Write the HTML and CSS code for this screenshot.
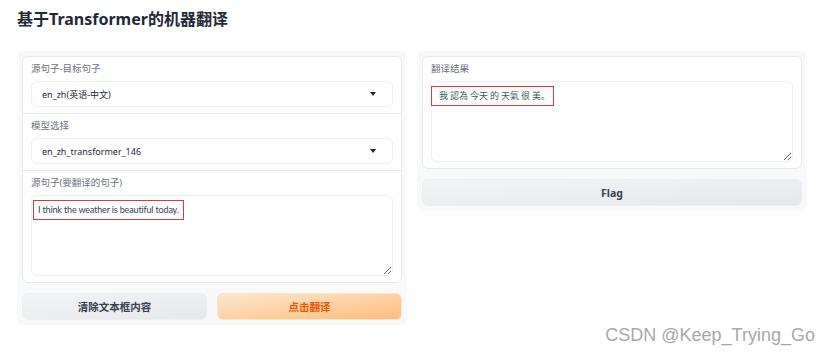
FILE: index.html
```html
<!DOCTYPE html>
<html lang="zh">
<head>
    <meta charset="UTF-8">
    <meta name="viewport" content="width=device-width, initial-scale=1.0">
    <title>基于Transformer的机器翻译</title>
    <link rel="stylesheet" href="styles.css">
</head>
<body>

    <h1 class="title">基于Transformer的机器翻译</h1>

    <div class="app">
        <div class="column">
            <div class="panel">
                <div class="box">
                    <div class="field">
                        <div class="label">源句子-目标句子</div>
                        <div class="select">
                            <span>en_zh(英语-中文)</span>
                            <span class="caret"></span>
                        </div>
                    </div>
                    <div class="field">
                        <div class="label">模型选择</div>
                        <div class="select">
                            <span>en_zh_transformer_146</span>
                            <span class="caret"></span>
                        </div>
                    </div>
                    <div class="field">
                        <div class="label">源句子(要翻译的句子)</div>
                        <div class="area-wrap">
                            <textarea class="area" readonly>I think the weather is beautiful today.</textarea>
                            <div class="mark mark-src"></div>
                        </div>
                    </div>
                </div>
                <div class="buttons">
                    <button class="btn btn-grey">清除文本框内容</button>
                    <button class="btn btn-orange">点击翻译</button>
                </div>
            </div>
        </div>

        <div class="column">
            <div class="panel">
                <div class="box">
                    <div class="field">
                        <div class="label">翻译结果</div>
                        <div class="area-wrap">
                            <textarea class="area area-out" readonly>我 認為 今天 的 天氣 很 美。</textarea>
                            <div class="mark mark-out"></div>
                        </div>
                    </div>
                </div>
                <div class="buttons">
                    <button class="btn btn-grey btn-flag">Flag</button>
                </div>
            </div>
        </div>
    </div>

    <div class="watermark">CSDN @Keep_Trying_Go</div>

</body>
</html>
```

FILE: styles.css
```css
* {
    margin: 0;
    padding: 0;
    box-sizing: border-box;
}

body {
    font-family: "Noto Sans", "Noto Sans CJK SC", sans-serif;
    background-color: #ffffff;
    color: #374151;
    padding: 7px 17px 0 17px;
    position: relative;
    height: 355px;
    overflow: hidden;
}

.title {
    font-size: 16px;
    font-weight: bold;
    line-height: 24px;
    color: #1f2937;
    margin-bottom: 20px;
}

.app {
    display: flex;
    gap: 10px;
    align-items: flex-start;
}

.column {
    width: 390px;
}

.panel {
    background-color: #f8f9fb;
    border-radius: 6px;
    padding: 5px;
}

.box {
    background-color: #ffffff;
    border: 1px solid #e7e9ee;
    border-radius: 6px;
}

.field {
    padding: 6px 8px;
    border-bottom: 1px solid #e7e9ee;
}

.field:last-child {
    border-bottom: none;
}

.label {
    font-size: 9.5px;
    line-height: 12px;
    color: #6b7280;
    margin-bottom: 6px;
}

.select {
    height: 26px;
    border: 1px solid #eceef2;
    border-radius: 6px;
    display: flex;
    align-items: center;
    justify-content: space-between;
    padding: 0 16px 0 10px;
    font-size: 9px;
    color: #1f2937;
}

.caret {
    width: 0;
    height: 0;
    border-left: 3.5px solid transparent;
    border-right: 3.5px solid transparent;
    border-top: 4px solid #1f2937;
}

.area-wrap {
    position: relative;
}

.area {
    display: block;
    width: 100%;
    height: 81px;
    border: 1px solid #eceef2;
    border-radius: 6px;
    padding: 7px 6px;
    font-family: "Lato", "Noto Sans CJK SC", sans-serif;
    font-size: 9px;
    letter-spacing: -0.15px;
    line-height: 14px;
    color: #374151;
    background: #ffffff;
    outline: none;
    resize: vertical;
}

.area-out {
    font-family: "Noto Sans CJK TC", sans-serif;
    font-size: 9px;
    padding-left: 7px;
    letter-spacing: 0;
    color: #4b5563;
}

.mark {
    position: absolute;
    top: 5px;
    height: 20px;
    border: 1px solid #e0363c;
}

.mark-src {
    left: 2px;
    width: 151px;
}

.mark-out {
    left: 0;
    width: 123px;
}

.buttons {
    display: flex;
    gap: 10px;
    margin-top: 10px;
}

.btn {
    flex: 1;
    height: 27px;
    border: 1px solid #eceef2;
    border-radius: 6px;
    font-family: "Noto Sans", "Noto Sans CJK SC", sans-serif;
    font-size: 10.5px;
    font-weight: bold;
    cursor: pointer;
}

.btn-grey {
    background: linear-gradient(to bottom right, #f3f4f6, #e5e7eb);
    color: #374151;
}

.btn-orange {
    background: linear-gradient(to bottom right, #fee7cf, #fdbd7d);
    border-color: #fde3c8;
    color: #ea580c;
}

.watermark {
    position: absolute;
    right: 15px;
    bottom: 9px;
    font-family: "Liberation Sans", sans-serif;
    font-size: 18px;
    color: #a8a8a8;
}
```
